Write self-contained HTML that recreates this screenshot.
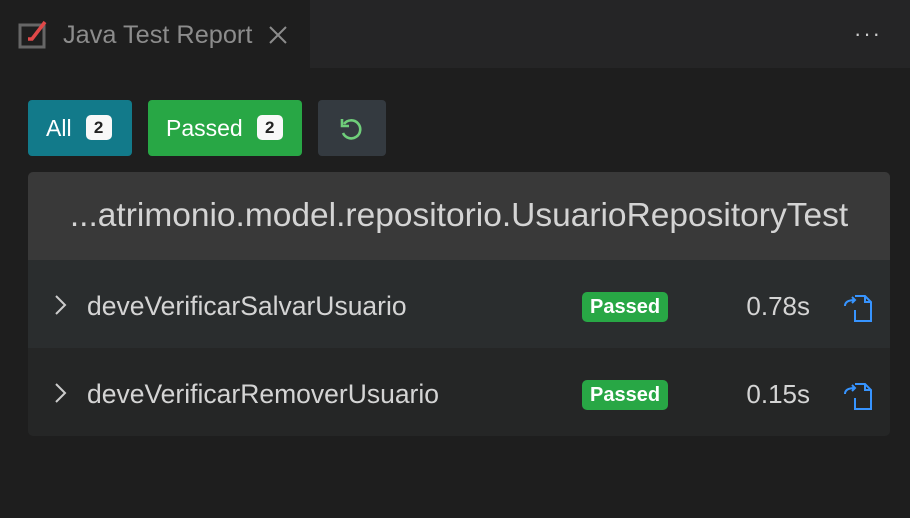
<!DOCTYPE html><html><head><style>
body{margin:0;width:910px;height:518px;background:#1e1e1e;font-family:"Liberation Sans",sans-serif;position:relative;overflow:hidden}
.tabbar{position:absolute;left:0;top:0;width:910px;height:68px;background:#252526}
.tab{position:absolute;left:0;top:0;width:310px;height:68px;background:#1e1e1e}
.tt{position:absolute;left:63px;top:21px;font-size:25.3px;color:#8c8c8c}
.btn{position:absolute;top:100px;height:56px;border-radius:4px;color:#fff;font-size:23px;line-height:56px}
.cnt{display:inline-block;background:#f8f8f8;color:#222;border-radius:5px;font-size:17px;font-weight:bold;line-height:25px;width:26px;text-align:center;vertical-align:3px;margin-left:14px}
.card{position:absolute;left:28px;top:172px;width:862px;height:264px;border-radius:5px;overflow:hidden}
.hd{height:88px;background:#393939;color:#d4d4d4;font-size:33.5px;line-height:88px;text-align:center}
.row{height:88px;position:relative;color:#d4d4d4;font-size:26.5px}
.nm{position:absolute;left:59px;top:31px}
.chev{position:absolute;left:26px;top:34px}
.pb{position:absolute;left:554px;top:32px;background:#28a745;color:#fff;font-weight:bold;font-size:20px;border-radius:5px;padding:3px 8px;line-height:24px}
.tm{position:absolute;right:80px;top:31px;font-size:26px}
.ic{position:absolute;left:814px;top:32px}
</style></head><body>
<div class="tabbar"><div class="tab">
<svg style="position:absolute;left:18px;top:17px" width="32" height="32"><rect x="2" y="8" width="24" height="22" fill="none" stroke="#666" stroke-width="3"/><path d="M10 22 L14 22 L27 5" stroke="#e04848" stroke-width="3.5" fill="none"/></svg>
<div class="tt">Java Test Report</div>
<svg style="position:absolute;left:268px;top:25px" width="20" height="20"><path d="M2 2L18 18M18 2L2 18" stroke="#8c8c8c" stroke-width="2"/></svg>
</div>
<div style="position:absolute;left:854px;top:21px;color:#ccc;font-size:22px;letter-spacing:2px">···</div></div>
<div class="btn" style="left:28px;width:104px;background:#127a8a;padding-left:18px;box-sizing:border-box">All<span class="cnt">2</span></div>
<div class="btn" style="left:148px;width:154px;background:#28a745;padding-left:18px;box-sizing:border-box">Passed<span class="cnt">2</span></div>
<div class="btn" style="left:318px;width:68px;background:#343a40"><svg style="position:absolute;left:20px;top:16px" width="28" height="26"><path d="M6 8 A9 9 0 1 1 5 17" stroke="#6fce7a" stroke-width="2.6" fill="none"/><path d="M4 3 V10 H11" stroke="#6fce7a" stroke-width="2.6" fill="none"/></svg></div>
<div class="card">
<div class="hd">...atrimonio.model.repositorio.UsuarioRepositoryTest</div>
<div class="row" style="background:#2a2d2e"><svg class="chev" width="14" height="22"><path d="M2 2L11 11L2 20" stroke="#ccc" stroke-width="2" fill="none"/></svg><div class="nm">deveVerificarSalvarUsuario</div><div class="pb">Passed</div><div class="tm">0.78s</div>
<svg class="ic" width="32" height="32"><path d="M13 4H23L29 10V29H13V18M23 4V10H29" stroke="#3794ff" stroke-width="2" fill="none"/><path d="M3 14C3 10 6 8 13 8M10 5L13 8L10 11" stroke="#3794ff" stroke-width="2" fill="none"/></svg></div>
<div class="row" style="background:#252626"><svg class="chev" width="14" height="22"><path d="M2 2L11 11L2 20" stroke="#ccc" stroke-width="2" fill="none"/></svg><div class="nm">deveVerificarRemoverUsuario</div><div class="pb">Passed</div><div class="tm">0.15s</div>
<svg class="ic" width="32" height="32"><path d="M13 4H23L29 10V29H13V18M23 4V10H29" stroke="#3794ff" stroke-width="2" fill="none"/><path d="M3 14C3 10 6 8 13 8M10 5L13 8L10 11" stroke="#3794ff" stroke-width="2" fill="none"/></svg></div>
</div>
</body></html>
